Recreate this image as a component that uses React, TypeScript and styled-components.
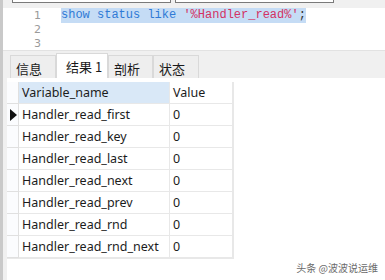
import React from "react";
import styled, { createGlobalStyle } from "styled-components";

const Global = createGlobalStyle`
  html, body { margin: 0; padding: 0; background: #ffffff; }
  body { width: 385px; height: 280px; overflow: hidden; font-family: "Noto Sans", "Noto Sans CJK SC", sans-serif; }
`;

const Page = styled.div`
  position: relative;
  width: 385px;
  height: 280px;
  display: flex;
  background: #ffffff;
`;

const LeftStrip = styled.div`
  width: 3px;
  flex: none;
  background: #c9c9c9;
`;

const Main = styled.div`
  flex: 1;
  display: flex;
  flex-direction: column;
  min-width: 0;
`;

const TopBar = styled.div`
  height: 8px;
  background: #f0f0f0;
  display: flex;
  gap: 4px;
  padding-left: 9px;
  align-items: flex-start;
`;

const TopBox = styled.div`
  width: 157px;
  height: 2px;
  background: #ffffff;
  border: 1px solid #7a7a7a;
  border-top: none;
`;

const Editor = styled.div`
  height: 42px;
  background: #ffffff;
  display: flex;
  overflow: hidden;
  font-family: "Liberation Mono", monospace;
  font-size: 12px;
`;

const Gutter = styled.div`
  width: 38px;
  flex: none;
  display: flex;
  flex-direction: column;
  align-items: flex-end;
  color: #9a9a9a;
  font-family: "DejaVu Sans", sans-serif;
  font-size: 11px;
  padding-top: 1px;
`;

const LineNo = styled.div`
  height: 14px;
  line-height: 14px;
`;

const Code = styled.div`
  padding-left: 20px;
`;

const CodeLine = styled.div`
  height: 15px;
  line-height: 15px;
  white-space: pre;
`;

const Sel = styled.span`
  background: #c5dcf5;
  display: inline-block;
  height: 15px;
`;

const Kw = styled.span`
  color: #2f7ad6;
`;

const Str = styled.span`
  color: #d33163;
`;

const Punct = styled.span`
  color: #333333;
`;

const TabBar = styled.div`
  height: 27px;
  background: #f0f0f0;
  border-top: 1px solid #e2e2e2;
  display: flex;
  align-items: flex-end;
  padding-left: 7px;
`;

const Tab = styled.div<{ $active?: boolean; $w: number }>`
  width: ${(p) => p.$w}px;
  height: ${(p) => (p.$active ? 25 : 23)}px;
  box-sizing: border-box;
  background: ${(p) => (p.$active ? "#ffffff" : "#eeeeee")};
  border: 1px solid #d9d9d9;
  border-bottom: none;
  font-size: 13px;
  color: #1a1a1a;
  display: flex;
  align-items: center;
  padding-left: ${(p) => (p.$active ? 9 : 5)}px;
  padding-top: ${(p) => (p.$active ? 0 : 2)}px;
  font-family: "Noto Sans CJK SC", sans-serif;
`;

const GridArea = styled.div`
  flex: 1;
  background: #ffffff;
  display: flex;
  padding-top: 4px;
  border-left: 4px solid #f0f0f0;
`;

const Grid = styled.div`
  display: grid;
  grid-template-columns: 12px 151px 63px;
  grid-auto-rows: 22px;
  align-self: flex-start;
  border-right: 1px solid #e8e8e8;
  border-bottom: 1px solid #e8e8e8;
`;

const Cell = styled.div<{ $hl?: boolean }>`
  box-sizing: border-box;
  border-right: 1px solid #e8e8e8;
  border-bottom: 1px solid #e8e8e8;
  background: ${(p) => (p.$hl ? "#d9e8f7" : "#ffffff")};
  font-size: 12.5px;
  color: #1c1c1c;
  display: flex;
  align-items: center;
  padding-left: 3px;
  white-space: nowrap;
  font-family: "Noto Sans", sans-serif;
`;

const RowHead = styled.div`
  box-sizing: border-box;
  border-right: 1px solid #e0e0e0;
  border-bottom: 1px solid #e0e0e0;
  background: #fbfcfe;
  display: flex;
  align-items: center;
  justify-content: center;
`;

const Arrow = styled.div`
  width: 0;
  height: 0;
  border-top: 6px solid transparent;
  border-bottom: 6px solid transparent;
  border-left: 7px solid #111111;
  margin-left: 1px;
`;

const Watermark = styled.div`
  position: absolute;
  right: 7px;
  bottom: 5px;
  font-size: 10px;
  color: #6b6b6b;
  font-family: "Noto Sans CJK SC", sans-serif;
  text-shadow: 0 0 2px #ffffff;
`;

const rows = [
  "Handler_read_first",
  "Handler_read_key",
  "Handler_read_last",
  "Handler_read_next",
  "Handler_read_prev",
  "Handler_read_rnd",
  "Handler_read_rnd_next",
];

export default function App() {
  return (
    <>
      <Global />
      <Page>
        <LeftStrip />
        <Main>
          <TopBar>
            <TopBox />
            <TopBox />
          </TopBar>
          <Editor>
            <Gutter>
              <LineNo>1</LineNo>
              <LineNo>2</LineNo>
              <LineNo>3</LineNo>
            </Gutter>
            <Code>
              <CodeLine>
                <Sel>
                  <Kw>show status like </Kw>
                  <Str>'%Handler_read%'</Str>
                  <Punct>;</Punct>
                </Sel>
              </CodeLine>
              <CodeLine> </CodeLine>
              <CodeLine> </CodeLine>
            </Code>
          </Editor>
          <TabBar>
            <Tab $w={46}>信息</Tab>
            <Tab $w={52} $active>结果 1</Tab>
            <Tab $w={45}>剖析</Tab>
            <Tab $w={46}>状态</Tab>
          </TabBar>
          <GridArea>
            <Grid>
              <RowHead />
              <Cell $hl>Variable_name</Cell>
              <Cell>Value</Cell>
              {rows.map((r, i) => (
                <React.Fragment key={r}>
                  <RowHead>{i === 0 ? <Arrow /> : null}</RowHead>
                  <Cell>{r}</Cell>
                  <Cell>0</Cell>
                </React.Fragment>
              ))}
            </Grid>
          </GridArea>
        </Main>
        <Watermark>头条 @波波说运维</Watermark>
      </Page>
    </>
  );
}
